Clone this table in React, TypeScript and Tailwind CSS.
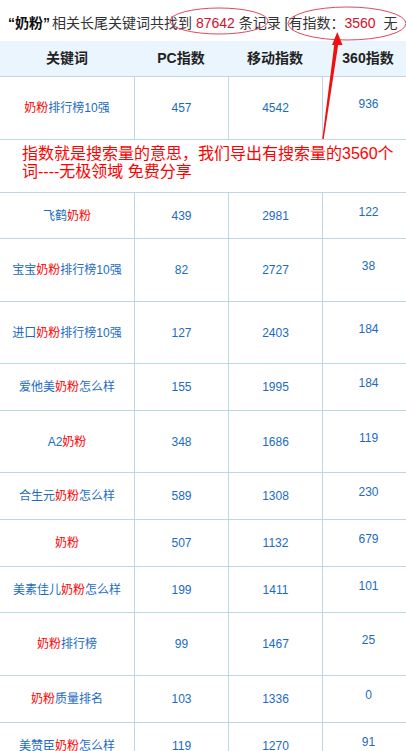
import React from "react";

type Row = {
  keyword: string;
  pc: number;
  mobile: number;
  s360: number;
  h: string;
};

const rowsTop: Row[] = [
  { keyword: "奶粉排行榜10强", pc: 457, mobile: 4542, s360: 936, h: "h-[63px]" },
];

const rows: Row[] = [
  { keyword: "飞鹤奶粉", pc: 439, mobile: 2981, s360: 122, h: "h-[46px]" },
  { keyword: "宝宝奶粉排行榜10强", pc: 82, mobile: 2727, s360: 38, h: "h-[63px]" },
  { keyword: "进口奶粉排行榜10强", pc: 127, mobile: 2403, s360: 184, h: "h-[62px]" },
  { keyword: "爱他美奶粉怎么样", pc: 155, mobile: 1995, s360: 184, h: "h-[47px]" },
  { keyword: "A2奶粉", pc: 348, mobile: 1686, s360: 119, h: "h-[62px]" },
  { keyword: "合生元奶粉怎么样", pc: 589, mobile: 1308, s360: 230, h: "h-[47px]" },
  { keyword: "奶粉", pc: 507, mobile: 1132, s360: 679, h: "h-[47px]" },
  { keyword: "美素佳儿奶粉怎么样", pc: 199, mobile: 1411, s360: 101, h: "h-[46px]" },
  { keyword: "奶粉排行榜", pc: 99, mobile: 1467, s360: 25, h: "h-[63px]" },
  { keyword: "奶粉质量排名", pc: 103, mobile: 1336, s360: 0, h: "h-[47px]" },
  { keyword: "美赞臣奶粉怎么样", pc: 119, mobile: 1270, s360: 91, h: "h-[47px]" },
];

function Keyword({ text }: { text: string }) {
  const parts = text.split("奶粉");
  return (
    <span>
      {parts.map((p, i) => (
        <React.Fragment key={i}>
          {i > 0 && <span className="text-[#ff0000]">奶粉</span>}
          {p}
        </React.Fragment>
      ))}
    </span>
  );
}

function TableRow({ r }: { r: Row }) {
  return (
    <div
      className={`grid grid-cols-[134px_94px_94px_92px] border-b border-[#bcd6ea] text-[12px] text-[#1b6bc2] ${r.h}`}
    >
      <div className="flex items-center justify-center">
        <Keyword text={r.keyword} />
      </div>
      <div className="flex items-center justify-center border-l border-[#bcd6ea]">{r.pc}</div>
      <div className="flex items-center justify-center border-l border-[#bcd6ea]">{r.mobile}</div>
      <div className="flex items-center justify-center border-l border-[#bcd6ea] pb-[8px]">
        {r.s360}
      </div>
    </div>
  );
}

export default function App() {
  return (
    <div className="relative w-[406px] h-[751px] overflow-hidden bg-white font-['Liberation_Sans','Noto_Sans_CJK_SC',sans-serif]">
      {/* Summary line */}
      <div className="h-[41px] pt-[6px] pl-[8px] flex items-center whitespace-pre text-[14px] text-[#333]">
        <span className="font-bold text-[#111]">“奶粉”</span>
        <span className="ml-[2px]">相关长尾关键词共找到 </span>
        <span className="text-[#d0102a]">87642</span>
        <span> 条记录 [有指数：</span>
        <span className="text-[#d0102a]">3560</span>
        <span>  无</span>
      </div>

      {/* Table */}
      <div className="w-[414px]">
        <div className="grid grid-cols-[134px_94px_94px_92px] h-[36px] bg-[#eaf5fd] border-b border-[#bcd6ea] text-[14px] font-bold text-[#222]">
          <div className="flex items-center justify-center">关键词</div>
          <div className="flex items-center justify-center">PC指数</div>
          <div className="flex items-center justify-center">移动指数</div>
          <div className="flex items-center justify-center">360指数</div>
        </div>

        {rowsTop.map((r) => (
          <TableRow key={r.keyword} r={r} />
        ))}

        {/* Annotation */}
        <div className="h-[53px] border-b border-[#bcd6ea] pt-[5px] pl-[22px]">
          <p className="w-[384px] text-[16px] leading-[18px] text-[#ff0000]">
            指数就是搜索量的意思，我们导出有搜索量的3560个词----无极领域 免费分享
          </p>
        </div>

        {rows.map((r) => (
          <TableRow key={r.keyword} r={r} />
        ))}
      </div>

      {/* Markup overlay */}
      <svg
        className="absolute left-0 top-0 pointer-events-none"
        width="406"
        height="145"
        viewBox="0 0 406 145"
      >
        <ellipse cx="219" cy="21" rx="49" ry="13" fill="none" stroke="#e2485c" strokeWidth="1" />
        <ellipse cx="347" cy="23.5" rx="59" ry="16.5" fill="none" stroke="#e2485c" strokeWidth="1" />
        <polygon points="322.3,139 323.7,139 338.6,42 334.6,42" fill="#f01010" />
        <polygon points="337.3,32 332,45 342.5,45" fill="#f01010" />
      </svg>
    </div>
  );
}
